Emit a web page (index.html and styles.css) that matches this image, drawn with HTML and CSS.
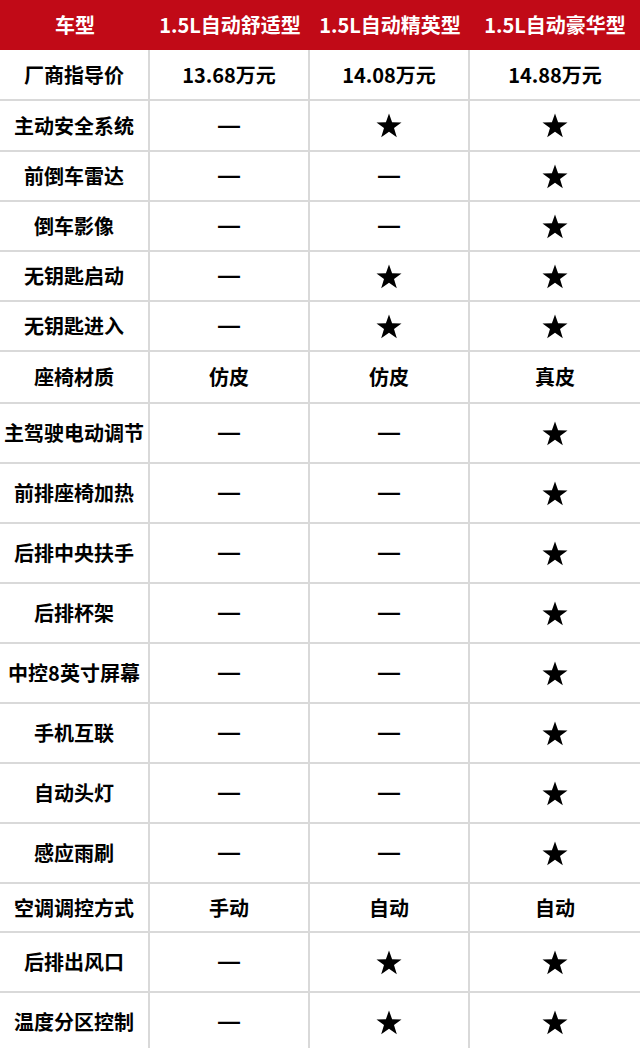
FILE: index.html
```html
<!DOCTYPE html>
<html lang="zh-CN">
<head>
<meta charset="utf-8">
<title>配置表</title>
<link rel="stylesheet" href="styles.css">
</head>
<body>
<svg width="0" height="0" class="defs">
  <defs>
    <symbol id="star" viewBox="0 0 26 25">
      <polygon points="13,0.5 16.1,9.2 25.5,9.4 18,15 20.8,24.3 13,18.8 5.2,24.3 8,15 0.5,9.4 9.9,9.2" />
    </symbol>
  </defs>
</svg>
<div class="table">
  <div class="row head"><div class="cell">车型</div><div class="cell">1.5L自动舒适型</div><div class="cell">1.5L自动精英型</div><div class="cell">1.5L自动豪华型</div></div>
  <div class="row h51"><div class="cell">厂商指导价</div><div class="cell">13.68万元</div><div class="cell">14.08万元</div><div class="cell">14.88万元</div></div>
  <div class="row h51"><div class="cell">主动安全系统</div><div class="cell"><span class="dash">—</span></div><div class="cell"><svg class="star"><use href="#star"/></svg></div><div class="cell"><svg class="star"><use href="#star"/></svg></div></div>
  <div class="row h50"><div class="cell">前倒车雷达</div><div class="cell"><span class="dash">—</span></div><div class="cell"><span class="dash">—</span></div><div class="cell"><svg class="star"><use href="#star"/></svg></div></div>
  <div class="row h50"><div class="cell">倒车影像</div><div class="cell"><span class="dash">—</span></div><div class="cell"><span class="dash">—</span></div><div class="cell"><svg class="star"><use href="#star"/></svg></div></div>
  <div class="row h50"><div class="cell">无钥匙启动</div><div class="cell"><span class="dash">—</span></div><div class="cell"><svg class="star"><use href="#star"/></svg></div><div class="cell"><svg class="star"><use href="#star"/></svg></div></div>
  <div class="row h50"><div class="cell">无钥匙进入</div><div class="cell"><span class="dash">—</span></div><div class="cell"><svg class="star"><use href="#star"/></svg></div><div class="cell"><svg class="star"><use href="#star"/></svg></div></div>
  <div class="row h52"><div class="cell">座椅材质</div><div class="cell">仿皮</div><div class="cell">仿皮</div><div class="cell">真皮</div></div>
  <div class="row h60"><div class="cell">主驾驶电动调节</div><div class="cell"><span class="dash">—</span></div><div class="cell"><span class="dash">—</span></div><div class="cell"><svg class="star"><use href="#star"/></svg></div></div>
  <div class="row h60"><div class="cell">前排座椅加热</div><div class="cell"><span class="dash">—</span></div><div class="cell"><span class="dash">—</span></div><div class="cell"><svg class="star"><use href="#star"/></svg></div></div>
  <div class="row h60"><div class="cell">后排中央扶手</div><div class="cell"><span class="dash">—</span></div><div class="cell"><span class="dash">—</span></div><div class="cell"><svg class="star"><use href="#star"/></svg></div></div>
  <div class="row h60"><div class="cell">后排杯架</div><div class="cell"><span class="dash">—</span></div><div class="cell"><span class="dash">—</span></div><div class="cell"><svg class="star"><use href="#star"/></svg></div></div>
  <div class="row h60"><div class="cell">中控8英寸屏幕</div><div class="cell"><span class="dash">—</span></div><div class="cell"><span class="dash">—</span></div><div class="cell"><svg class="star"><use href="#star"/></svg></div></div>
  <div class="row h60"><div class="cell">手机互联</div><div class="cell"><span class="dash">—</span></div><div class="cell"><span class="dash">—</span></div><div class="cell"><svg class="star"><use href="#star"/></svg></div></div>
  <div class="row h60"><div class="cell">自动头灯</div><div class="cell"><span class="dash">—</span></div><div class="cell"><span class="dash">—</span></div><div class="cell"><svg class="star"><use href="#star"/></svg></div></div>
  <div class="row h60"><div class="cell">感应雨刷</div><div class="cell"><span class="dash">—</span></div><div class="cell"><span class="dash">—</span></div><div class="cell"><svg class="star"><use href="#star"/></svg></div></div>
  <div class="row h49"><div class="cell">空调调控方式</div><div class="cell">手动</div><div class="cell">自动</div><div class="cell">自动</div></div>
  <div class="row h60"><div class="cell">后排出风口</div><div class="cell"><span class="dash">—</span></div><div class="cell"><svg class="star"><use href="#star"/></svg></div><div class="cell"><svg class="star"><use href="#star"/></svg></div></div>
  <div class="row h60"><div class="cell">温度分区控制</div><div class="cell"><span class="dash">—</span></div><div class="cell"><svg class="star"><use href="#star"/></svg></div><div class="cell"><svg class="star"><use href="#star"/></svg></div></div>
</div>
</body>
</html>
```

FILE: styles.css
```css
* { box-sizing: border-box; }
html, body {
  margin: 0;
  padding: 0;
  background: #fff;
}
body {
  width: 640px;
  height: 1048px;
  overflow: hidden;
  font-family: "Noto Sans CJK SC", "Noto Sans", sans-serif;
  font-weight: 700;
  font-size: 20px;
  color: #000;
}
.defs { position: absolute; width: 0; height: 0; overflow: hidden; }
.table {
  display: flex;
  flex-direction: column;
}
.row {
  display: grid;
  grid-template-columns: 150px 160px 160px 170px;
  border-bottom: 2px solid #d9d9d9;
}
.row .cell {
  display: flex;
  align-items: center;
  justify-content: center;
  white-space: nowrap;
  line-height: 1;
  border-right: 2px solid #d9d9d9;
}
.row .cell:last-child { border-right: none; }
.row.head {
  height: 50px;
  background: #c10a17;
  color: #fff;
  border-bottom: none;
}
.row.head .cell { border-right: none; }
.h49 { height: 49px; }
.h50 { height: 50px; }
.h51 { height: 51px; }
.h52 { height: 52px; }
.h60 { height: 60px; }
.dash {
  font-family: "Liberation Sans", "DejaVu Sans", sans-serif;
  font-weight: 700;
  font-size: 22px;
  line-height: 1;
}
.star {
  width: 26px;
  height: 25px;
  fill: #000;
}
```
